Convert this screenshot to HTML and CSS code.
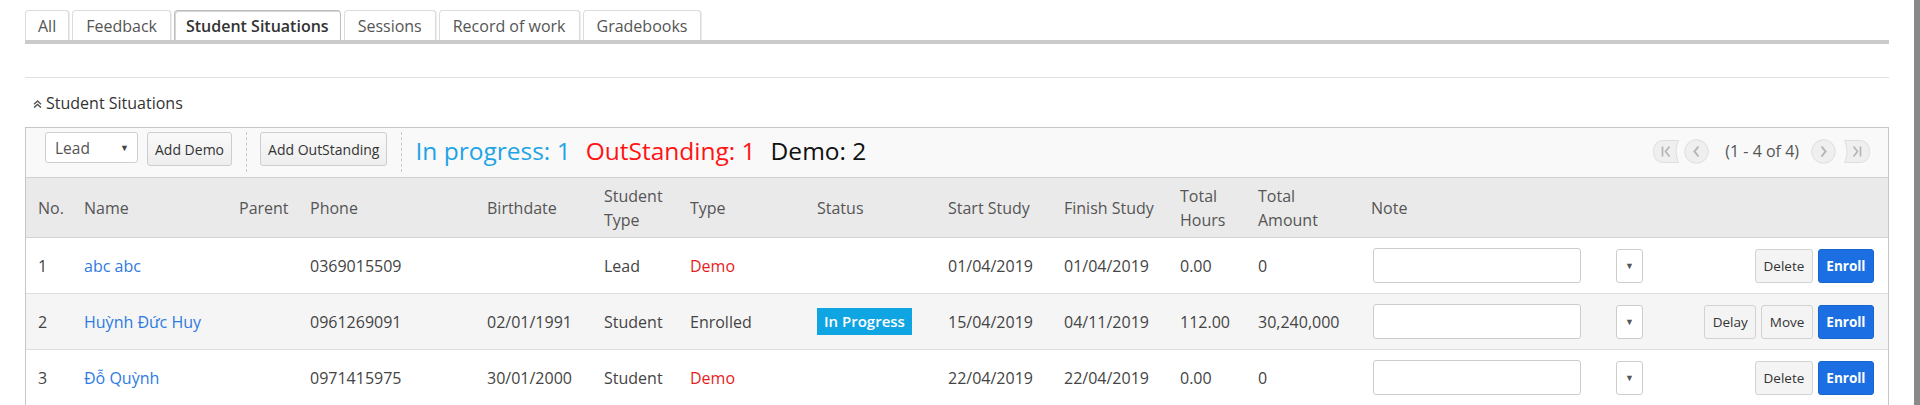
FILE: index.html
```html
<!DOCTYPE html>
<html lang="en">
<head>
<meta charset="utf-8">
<title>Student Situations</title>
<link rel="stylesheet" href="styles.css">
</head>
<body>
<div class="page">
  <ul class="tabs">
    <li class="tab">All</li>
    <li class="tab">Feedback</li>
    <li class="tab active">Student Situations</li>
    <li class="tab">Sessions</li>
    <li class="tab">Record of work</li>
    <li class="tab">Gradebooks</li>
  </ul>
  <div class="sep"></div>
  <div class="section-title">
    <svg class="chev" width="9" height="8" viewBox="0 0 9 8"><polyline points="1,4.2 4.5,1 8,4.2" fill="none" stroke="#555" stroke-width="1.4"/><polyline points="1,7.6 4.5,4.4 8,7.6" fill="none" stroke="#555" stroke-width="1.4"/></svg>
    <span>Student Situations</span>
  </div>
  <div class="grid">
    <div class="toolbar">
      <div class="select"><span>Lead</span><span class="caret">&#9660;</span></div>
      <button class="btn">Add Demo</button>
      <span class="vsep"></span>
      <button class="btn">Add OutStanding</button>
      <span class="vsep"></span>
      <div class="stats">
        <span class="s-prog">In progress: 1</span>
        <span class="s-out">OutStanding: 1</span>
        <span class="s-demo">Demo: 2</span>
      </div>
      <div class="pager">
        <svg width="26" height="23" viewBox="0 0 26 23"><path d="M11 .5 H25.5 Q20.5 11.5 25.5 22.5 H11 Q.5 22.5 .5 11.5 Q.5 .5 11 .5 Z" fill="#efefef" stroke="#dedede"/><line x1="9.5" y1="6.5" x2="9.5" y2="16.5" stroke="#b5b5b5" stroke-width="1.7"/><polyline points="16.5,6.5 12.5,11.5 16.5,16.5" fill="none" stroke="#b5b5b5" stroke-width="1.7"/></svg>
        <svg class="pg-prev" width="25" height="25" viewBox="0 0 25 25"><circle cx="12.5" cy="12.5" r="11.8" fill="#efefef" stroke="#dedede"/><polyline points="14.5,7.5 10.5,12.5 14.5,17.5" fill="none" stroke="#b5b5b5" stroke-width="2"/></svg>
        <span class="pg-info">(1 - 4 of 4)</span>
        <svg class="pg-next" width="25" height="25" viewBox="0 0 25 25"><circle cx="12.5" cy="12.5" r="11.8" fill="#efefef" stroke="#dedede"/><polyline points="10.5,7.5 14.5,12.5 10.5,17.5" fill="none" stroke="#b5b5b5" stroke-width="2"/></svg>
        <svg class="pg-last" width="26" height="23" viewBox="0 0 26 23"><path d="M15 .5 H.5 Q5.5 11.5 .5 22.5 H15 Q25.5 22.5 25.5 11.5 Q25.5 .5 15 .5 Z" fill="#efefef" stroke="#dedede"/><line x1="16.5" y1="6.5" x2="16.5" y2="16.5" stroke="#b5b5b5" stroke-width="1.7"/><polyline points="9.5,6.5 13.5,11.5 9.5,16.5" fill="none" stroke="#b5b5b5" stroke-width="1.7"/></svg>
      </div>
    </div>
    <table class="tbl">
      <colgroup>
        <col class="c-no"><col class="c-name"><col class="c-parent"><col class="c-phone"><col class="c-birth"><col class="c-stype"><col class="c-type"><col class="c-status"><col class="c-start"><col class="c-finish"><col class="c-hours"><col class="c-amount"><col class="c-note"><col class="c-dd"><col class="c-act">
      </colgroup>
      <thead>
        <tr>
          <th>No.</th><th>Name</th><th>Parent</th><th>Phone</th><th>Birthdate</th><th>Student<br>Type</th><th>Type</th><th>Status</th><th>Start Study</th><th>Finish Study</th><th>Total<br>Hours</th><th>Total<br>Amount</th><th>Note</th><th></th><th></th>
        </tr>
      </thead>
      <tbody>
        <tr>
          <td>1</td><td><a class="lnk">abc abc</a></td><td></td><td>0369015509</td><td></td><td>Lead</td><td class="red">Demo</td><td></td><td>01/04/2019</td><td>01/04/2019</td><td>0.00</td><td>0</td>
          <td><input class="note" type="text"></td>
          <td><span class="dd">&#9660;</span></td>
          <td class="act"><button class="rbtn">Delete</button><button class="rbtn enroll">Enroll</button></td>
        </tr>
        <tr class="alt">
          <td>2</td><td><a class="lnk">Huỳnh Đức Huy</a></td><td></td><td>0961269091</td><td>02/01/1991</td><td>Student</td><td>Enrolled</td><td><span class="badge">In Progress</span></td><td>15/04/2019</td><td>04/11/2019</td><td>112.00</td><td>30,240,000</td>
          <td><input class="note" type="text"></td>
          <td><span class="dd">&#9660;</span></td>
          <td class="act"><button class="rbtn">Delay</button><button class="rbtn">Move</button><button class="rbtn enroll">Enroll</button></td>
        </tr>
        <tr>
          <td>3</td><td><a class="lnk">Đỗ Quỳnh</a></td><td></td><td>0971415975</td><td>30/01/2000</td><td>Student</td><td class="red">Demo</td><td></td><td>22/04/2019</td><td>22/04/2019</td><td>0.00</td><td>0</td>
          <td><input class="note" type="text"></td>
          <td><span class="dd">&#9660;</span></td>
          <td class="act"><button class="rbtn">Delete</button><button class="rbtn enroll">Enroll</button></td>
        </tr>
      </tbody>
    </table>
  </div>
</div>
<div class="vbar"></div>
</body>
</html>
```

FILE: styles.css
```css
body {
  margin: 0;
  display: flex;
  min-height: 100vh;
  font-family: "Open Sans", "Noto Sans", sans-serif;
  color: #333;
  background: #fff;
}
.page {
  flex: 1;
  min-width: 0;
  padding: 10px 25px 40px;
}
.vbar {
  flex: none;
  width: 6px;
  background: #898989;
}

/* tabs */
.tabs {
  display: flex;
  gap: 3px;
  margin: 0;
  padding: 0;
  list-style: none;
  height: 30px;
  border-bottom: 4px solid #cacaca;
}
.tab {
  box-sizing: border-box;
  height: 30px;
  line-height: 30px;
  padding: 0 13px;
  font-size: 16px;
  color: #555;
  background: #fff;
  border: 1px solid #dcdcdc;
  border-bottom: 0;
  border-radius: 4px 4px 0 0;
  box-shadow: 1px 0 0 #ececec;
}
.tab:first-child {
  padding: 0 12px;
}
.tab.active {
  color: #333;
  font-weight: 600;
  padding: 0 11px;
  border: 1px solid #bdbdbd;
  border-bottom: 0;
  box-shadow: inset 1px 1px 0 #d6d6d6;
}

.sep {
  margin-top: 33px;
  height: 1px;
  background: #e0e0e0;
}

.section-title {
  margin-top: 14px;
  height: 22px;
  display: flex;
  align-items: center;
  gap: 4px;
  padding-left: 8px;
  font-size: 16px;
  color: #333;
}
.chev {
  margin-top: 2px;
}

/* grid */
.grid {
  margin-top: 13px;
  border: 1px solid #c6c6c6;
}
.toolbar {
  display: flex;
  align-items: flex-start;
  height: 40px;
  padding: 4px 18px 5px 19px;
  background: #f9f9f9;
  border-bottom: 1px solid #d0d0d0;
}
.select {
  box-sizing: border-box;
  width: 93px;
  height: 31px;
  display: flex;
  align-items: center;
  justify-content: space-between;
  padding: 0 8px 0 9px;
  background: #fff;
  border: 1px solid #cfcfcf;
  border-radius: 3px;
  font-size: 15.5px;
  color: #555;
  margin-right: 9px;
}
.caret {
  font-size: 9px;
  color: #444;
}
.btn {
  box-sizing: border-box;
  height: 34px;
  padding: 0 7px;
  font-family: inherit;
  font-size: 14px;
  color: #333;
  background: linear-gradient(#f9f9f9, #eeeeee);
  border: 1px solid #cdcdcd;
  border-radius: 3px;
}
.vsep {
  width: 0;
  height: 40px;
  border-left: 1px dashed #c8c8c8;
  margin: 0 13px 0 14px;
}
.stats {
  display: flex;
  gap: 15px;
  line-height: 38px;
  font-size: 24.5px;
}
.s-prog { color: #1ea4e4; }
.s-out { color: #ff1414; }
.s-demo { color: #111; }

.pager {
  margin-left: auto;
  height: 38px;
  display: flex;
  align-items: center;
}
.pg-prev { margin-left: 5px; }
.pg-info {
  margin: 0 12px 0 16px;
  font-size: 16px;
  color: #555;
}
.pg-last { margin-left: 8px; }

/* table */
.tbl {
  width: 100%;
  table-layout: fixed;
  border-collapse: separate;
  border-spacing: 0;
  font-size: 16px;
}
.c-no { width: 46px; }
.c-name { width: 155px; }
.c-parent { width: 71px; }
.c-phone { width: 177px; }
.c-birth { width: 117px; }
.c-stype { width: 86px; }
.c-type { width: 127px; }
.c-status { width: 131px; }
.c-start { width: 116px; }
.c-finish { width: 116px; }
.c-hours { width: 78px; }
.c-amount { width: 113px; }
.c-note { width: 245px; }
.c-dd { width: 76px; }
.c-act { width: auto; }

.tbl th {
  box-sizing: border-box;
  height: 60px;
  padding: 0 0 0 12px;
  text-align: left;
  font-weight: 400;
  color: #555;
  line-height: 24px;
  white-space: nowrap;
  background: #eaeaeb;
  border-bottom: 1px solid #d3d3d3;
  vertical-align: middle;
}
.tbl td {
  box-sizing: border-box;
  height: 56px;
  padding: 0 0 0 12px;
  color: #444;
  white-space: nowrap;
  border-bottom: 1px solid #dedede;
  vertical-align: middle;
}
.tbl tr.alt td {
  background: #f5f5f5;
}
.lnk {
  color: #2d7be2;
  text-decoration: none;
}
.tbl td.red {
  color: #e41e1e;
}
.badge {
  display: inline-block;
  height: 27px;
  line-height: 27px;
  padding: 0 7px;
  background: #0fa4e2;
  color: #fff;
  font-size: 15px;
  font-weight: 600;
}
.note {
  box-sizing: border-box;
  display: block;
  width: 208px;
  height: 35px;
  margin-left: 2px;
  border: 1px solid #cccccc;
  border-radius: 3px;
  background: #fff;
}
.dd {
  box-sizing: border-box;
  display: flex;
  align-items: center;
  justify-content: center;
  width: 27px;
  height: 34px;
  border: 1px solid #cccccc;
  border-radius: 3px;
  background: #fff;
  font-size: 9px;
  color: #555;
}
.tbl td.act {
  text-align: right;
  padding: 0 14px 0 0;
}
.rbtn {
  box-sizing: border-box;
  height: 34px;
  padding: 0 7.5px;
  margin-left: 5px;
  font-family: inherit;
  font-size: 13.5px;
  color: #333;
  background: #f4f4f4;
  border: 1px solid #d2d2d2;
  border-radius: 3px;
  vertical-align: middle;
}
.rbtn.enroll {
  background: #1b6fe2;
  border-color: #1865d0;
  color: #fff;
  font-weight: 700;
}
```
